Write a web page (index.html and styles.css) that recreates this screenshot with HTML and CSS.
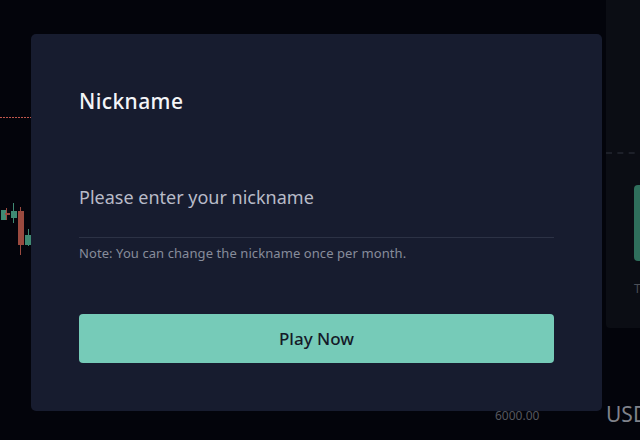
FILE: index.html
```html
<!DOCTYPE html>
<html>
<head>
<meta charset="utf-8">
<link rel="stylesheet" href="styles.css">
</head>
<body>
<div class="page">
  <div class="chart">
    <div class="price-line"></div>
    <div class="candle green" style="left:1px;top:210px;height:10px;"></div>
    <div class="wick red" style="left:6px;top:208px;height:12px;"></div>
    <div class="candle red" style="left:5px;top:213px;height:2px;width:5px"></div>
    <div class="wick green" style="left:13px;top:203px;height:20px;"></div>
    <div class="candle green" style="left:11px;top:211px;height:7px;"></div>
    <div class="wick red" style="left:20px;top:207px;height:48px;"></div>
    <div class="candle red" style="left:18px;top:211px;height:34px;"></div>
    <div class="wick green" style="left:28px;top:229px;height:17px;"></div>
    <div class="candle green" style="left:25px;top:235px;height:10px;"></div>
  </div>
  <div class="side-panel">
    <div class="side-top"></div>
    <div class="side-body">
      <div class="side-btn"></div>
      <div class="side-text">T</div>
    </div>
  </div>
  <div class="axis-label">6000.00</div>
  <div class="usd">USD</div>

  <div class="modal">
    <h2 class="title">Nickname</h2>
    <div class="field">
      <input class="input" type="text" placeholder="Please enter your nickname">
    </div>
    <p class="note">Note: You can change the nickname once per month.</p>
    <button class="play">Play Now</button>
  </div>
</div>
</body>
</html>
```

FILE: styles.css
```css
html, body {
  margin: 0;
  padding: 0;
  background: #03040b;
  font-family: "Noto Sans", Roboto, sans-serif;
}
.page {
  position: relative;
  width: 640px;
  height: 440px;
  overflow: hidden;
  background: #03040b;
}
.chart {
  position: absolute;
  left: 0;
  top: 0;
  width: 40px;
  height: 440px;
}
.price-line {
  position: absolute;
  left: 0;
  top: 117px;
  width: 40px;
  height: 1px;
  background: repeating-linear-gradient(90deg, #c0564c 0 2px, transparent 2px 3px);
}
.candle {
  position: absolute;
  width: 6px;
}
.wick {
  position: absolute;
  width: 1px;
}
.candle.green { background: #3f8a73; }
.candle.red { background: #9a4a3f; }
.wick.green { background: #3f8a73; }
.wick.red { background: #9a4a3f; }

.side-panel {
  position: absolute;
  left: 606px;
  top: 0;
  width: 40px;
  height: 328px;
  background: #0b0d14;
  border-radius: 0 0 0 4px;
}
.side-top {
  height: 152px;
  border-bottom: 2px dashed #1d2029;
}
.side-body {
  padding: 31px 0 0 28px;
}
.side-btn {
  width: 20px;
  height: 76px;
  background: #2f6f5c;
  border-radius: 4px;
}
.side-text {
  margin-top: 19px;
  font-size: 12px;
  color: #4c4f57;
}
.axis-label {
  position: absolute;
  left: 495px;
  top: 407px;
  font-size: 12px;
  color: #55575e;
}
.usd {
  position: absolute;
  left: 606px;
  top: 400px;
  width: 34px;
  overflow: hidden;
  font-size: 21px;
  color: #7f828a;
  white-space: nowrap;
}

.modal {
  position: absolute;
  left: 31px;
  top: 34px;
  width: 571px;
  height: 377px;
  box-sizing: border-box;
  padding: 52px 48px 0;
  background: #171c2f;
  border-radius: 5px;
  display: flex;
  flex-direction: column;
}
.title {
  margin: 0;
  font-size: 21px;
  font-weight: 500;
  line-height: 30px;
  letter-spacing: 0.4px;
  color: #f4f5f8;
}
.field {
  margin-top: 70px;
  border-bottom: 1px solid #2c3245;
}
.input {
  display: block;
  width: 100%;
  box-sizing: border-box;
  border: none;
  outline: none;
  background: transparent;
  padding: 0 0 29px;
  height: 51px;
  font-family: inherit;
  font-size: 18px;
  color: #c1c4d0;
}
.input::placeholder {
  color: #b8bbc8;
}
.note {
  margin: 6px 0 0;
  font-size: 13px;
  line-height: 18px;
  letter-spacing: 0.08px;
  color: #878c9b;
}
.play {
  margin-top: 52px;
  height: 49px;
  width: 100%;
  border: none;
  border-radius: 4px;
  background: #76cbb8;
  font-family: inherit;
  font-size: 17px;
  font-weight: 500;
  color: #151a28;
  cursor: pointer;
}
```
